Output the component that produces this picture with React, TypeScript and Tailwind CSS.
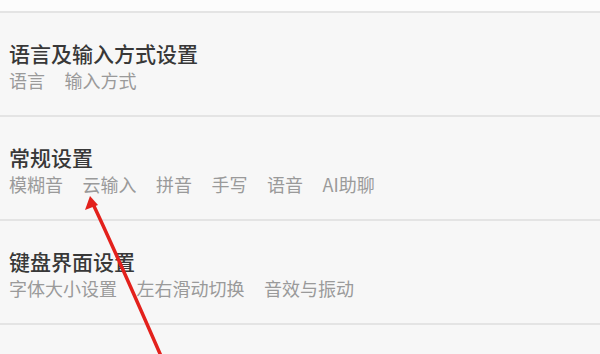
import React from "react";

const rows = [
  { title: "语言及输入方式设置", items: ["语言", "输入方式"] },
  { title: "常规设置", items: ["模糊音", "云输入", "拼音", "手写", "语音", "AI助聊"] },
  { title: "键盘界面设置", items: ["字体大小设置", "左右滑动切换", "音效与振动"] },
];

export default function App() {
  return (
    <div
      className="relative w-[600px] h-[354px] overflow-hidden bg-[#f7f7f7]"
      style={{ fontFamily: '"Noto Sans CJK SC", "Noto Sans", sans-serif' }}
    >
      <div className="h-[11px] bg-[#fcfcfc]" />
      <div className="h-[2px] bg-[#e4e4e4]" />
      {rows.map((r) => (
        <div key={r.title}>
          <div className="h-[102px] px-[9px] pt-[27px]">
            <div className="text-[21px] leading-[26px] font-medium text-[#383838]">{r.title}</div>
            <div className="mt-[1px] flex gap-[19.5px] text-[18px] leading-[26px] text-[#9a9a9a]">
              {r.items.map((it) => (
                <span key={it}>{it}</span>
              ))}
            </div>
          </div>
          <div className="h-[2px] bg-[#e4e4e4]" />
        </div>
      ))}
      <svg className="absolute left-0 top-0" width="600" height="354" viewBox="0 0 600 354">
        <path d="M93 204 Q112 244 161 356" stroke="#e3211c" strokeWidth="3.5" fill="none" strokeLinecap="round" />
        <polygon points="90,196 85,210 98,205" fill="#e3211c" />
      </svg>
    </div>
  );
}
